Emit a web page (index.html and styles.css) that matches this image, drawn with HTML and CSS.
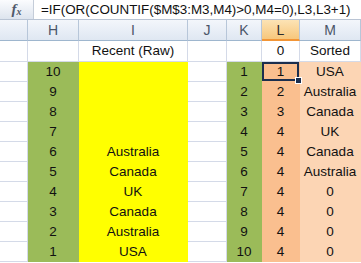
FILE: index.html
```html
<!DOCTYPE html>
<html lang="en">
<head>
    <meta charset="UTF-8">
    <title>Sorted list</title>
    <link rel="stylesheet" href="styles.css">
</head>
<body>
    <!-- formula bar -->
    <div class="formula-bar">
        <div class="fx"><span class="f">f</span><span class="x">x</span></div>
        <div class="formula">=IF(OR(COUNTIF($M$3:M3,M4)&gt;0,M4=0),L3,L3+1)</div>
    </div>

    <div class="sheet">
        <!-- column headers -->
        <div class="hd"></div>
        <div class="hd">H</div>
        <div class="hd">I</div>
        <div class="hd">J</div>
        <div class="hd">K</div>
        <div class="hd active">L</div>
        <div class="hd">M</div>

        <!-- row 2 -->
        <div class="c"></div>
        <div class="c"></div>
        <div class="c">Recent (Raw)</div>
        <div class="c"></div>
        <div class="c"></div>
        <div class="c">0</div>
        <div class="c">Sorted</div>

        <div class="c"></div><div class="c g">10</div><div class="c y"></div><div class="c"></div><div class="c g">1</div><div class="c o sel">1</div><div class="c p">USA</div>
        <div class="c"></div><div class="c g">9</div><div class="c y"></div><div class="c"></div><div class="c g">2</div><div class="c o">2</div><div class="c p">Australia</div>
        <div class="c"></div><div class="c g">8</div><div class="c y"></div><div class="c"></div><div class="c g">3</div><div class="c o">3</div><div class="c p">Canada</div>
        <div class="c"></div><div class="c g">7</div><div class="c y"></div><div class="c"></div><div class="c g">4</div><div class="c o">4</div><div class="c p">UK</div>
        <div class="c"></div><div class="c g">6</div><div class="c y">Australia</div><div class="c"></div><div class="c g">5</div><div class="c o">4</div><div class="c p">Canada</div>
        <div class="c"></div><div class="c g">5</div><div class="c y">Canada</div><div class="c"></div><div class="c g">6</div><div class="c o">4</div><div class="c p">Australia</div>
        <div class="c"></div><div class="c g">4</div><div class="c y">UK</div><div class="c"></div><div class="c g">7</div><div class="c o">4</div><div class="c p">0</div>
        <div class="c"></div><div class="c g">3</div><div class="c y">Canada</div><div class="c"></div><div class="c g">8</div><div class="c o">4</div><div class="c p">0</div>
        <div class="c"></div><div class="c g">2</div><div class="c y">Australia</div><div class="c"></div><div class="c g">9</div><div class="c o">4</div><div class="c p">0</div>
        <div class="c"></div><div class="c g">1</div><div class="c y">USA</div><div class="c"></div><div class="c g">10</div><div class="c o">4</div><div class="c p">0</div>
    </div>
</body>
</html>
```

FILE: styles.css
```css
body {
    margin: 0;
    background: #fff;
    font-family: "Liberation Sans", Arial, sans-serif;
    color: #111;
    overflow: hidden;
}

.formula-bar {
    display: flex;
    height: 20px;
    border-bottom: 1px solid #b9c4d4;
    box-sizing: border-box;
}
.fx {
    width: 33px;
    border-right: 1px solid #c5cdd9;
    background: linear-gradient(#fbfcfe, #dde4ee);
    display: flex;
    justify-content: center;
    align-items: center;
    font-family: "Liberation Serif", serif;
    font-style: italic;
    color: #50596a;
}
.f {
    font-size: 15px;
    font-weight: bold;
}
.x {
    font-size: 10px;
    margin-top: 4px;
    font-weight: bold;
}
.formula {
    padding-left: 7px;
    font-size: 13.4px;
    line-height: 20px;
    white-space: nowrap;
}

.sheet {
    display: grid;
    grid-template-columns: 28px 51px 109px 39px 35px 38px 61px;
    grid-template-rows: 21px 21px repeat(10, 20px);
    font-size: 13.5px;
}

.hd {
    background: linear-gradient(#f3f6fb, #dfe7f2);
    border-right: 1px solid #b7c6d9;
    border-bottom: 1px solid #9eb6ce;
    color: #4a5568;
    text-align: center;
    line-height: 20px;
    font-size: 14px;
}
.hd.active {
    background: linear-gradient(#fce3b5, #f7c77c);
    border-bottom: 2px solid #f29536;
    color: #2c2c2c;
}

.c {
    border-right: 1px solid #d4dae8;
    border-bottom: 1px solid #d4dae8;
    text-align: center;
    line-height: 20px;
    white-space: nowrap;
    overflow: hidden;
}
.g {
    background: #9bbb59;
    border-color: #9bbb59;
}
.y {
    background: #ffff00;
    border-color: #ffff00;
}
.o {
    background: #fabf8f;
    border-color: #fabf8f;
}
.p {
    background: #fcd5b4;
    border-color: #fcd5b4;
}
.sel {
    position: relative;
    overflow: visible;
    box-shadow: inset 0 0 0 2px #1b2e4e;
}
.sel::after {
    content: "";
    position: absolute;
    right: -3px;
    bottom: -3px;
    width: 5px;
    height: 5px;
    background: #1b2e4e;
    border: 1px solid #fff;
}
```
